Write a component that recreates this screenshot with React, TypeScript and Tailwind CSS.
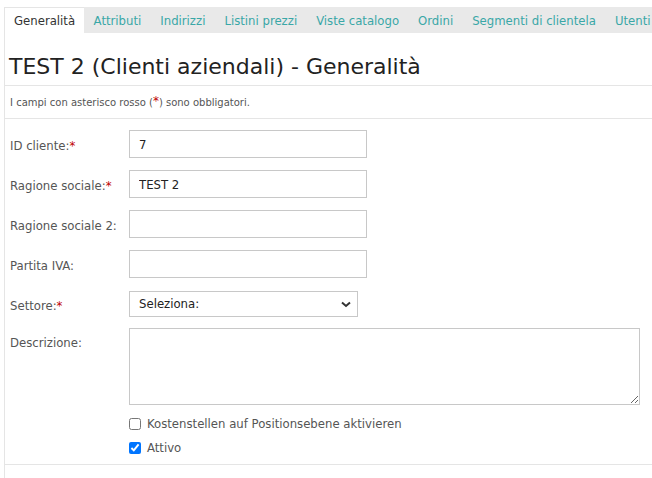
import React from "react";

const font = { fontFamily: '"DejaVu Sans Condensed", "DejaVu Sans", sans-serif' };
const wide = { fontFamily: '"DejaVu Sans", sans-serif' };

function Star() {
  return <span className="text-[#c00000] text-[13px] leading-none">*</span>;
}

function Row({ label, req, children }: { label: string; req?: boolean; children: React.ReactNode }) {
  return (
    <div className="flex items-center h-[40px]">
      <div className="w-[119px] text-[13px] text-[#555] pt-[3px]">
        {label}
        {req && <Star />}
      </div>
      {children}
    </div>
  );
}

const inputCls =
  "h-[28px] w-[238px] border border-[#c8c8c8] px-[9px] text-[13px] text-[#222] outline-none bg-white";

export default function App() {
  const tabs = ["Attributi", "Indirizzi", "Listini prezzi", "Viste catalogo", "Ordini", "Segmenti di clientela", "Utenti"];
  return (
    <div className="w-[652px] h-[478px] bg-white overflow-hidden pt-[7px]" style={font}>
      <div className="ml-[4px] border-l border-[#e5e5e5] h-full">
        <div className="flex h-[26px] bg-[#e9e9e9] whitespace-nowrap overflow-hidden">
          <div className="bg-white border-t border-[#e5e5e5] px-[9px] pt-[1px] flex items-center text-[13px] text-[#333]">
            Generalità
          </div>
          {tabs.map((t) => (
            <div key={t} className="px-[9.5px] pt-[1px] flex items-center text-[13px] text-[#3aa7a7]">
              {t}
            </div>
          ))}
        </div>
        <div
          className="h-[53px] flex items-end pb-[2px] pl-[4px] text-[22px] text-[#222] border-b border-[#e5e5e5]"
          style={wide}
        >
          TEST 2 (Clienti aziendali) - Generalità
        </div>
        <div
          className="h-[33px] flex items-center pl-[5px] text-[10px] text-[#555] border-b border-[#e5e5e5]"
          style={wide}
        >
          I campi con asterisco rosso (<span className="text-[#c00000] text-[12px] leading-none relative top-[-1px]">*</span>) sono obbligatori.
        </div>
        <div className="pl-[5px] pt-[5px]">
          <Row label="ID cliente:" req>
            <input className={inputCls} defaultValue="7" />
          </Row>
          <Row label="Ragione sociale:" req>
            <input className={inputCls} defaultValue="TEST 2" />
          </Row>
          <Row label="Ragione sociale 2:">
            <input className={inputCls} />
          </Row>
          <Row label="Partita IVA:">
            <input className={inputCls} />
          </Row>
          <Row label="Settore:" req>
            <div className="relative h-[26px] w-[229px] border border-[#c8c8c8] flex items-center px-[9px] text-[13px] text-[#222]">
              Seleziona:
              <svg className="absolute right-[6px] top-[9px]" width="10" height="7" viewBox="0 0 10 7">
                <path d="M1 1.5 L5 5 L9 1.5" stroke="#333" strokeWidth="2" fill="none" />
              </svg>
            </div>
          </Row>
          <div className="flex mt-[4px]">
            <div className="w-[119px] text-[13px] text-[#555] pt-[5px]">Descrizione:</div>
            <textarea className="h-[77px] w-[511px] border border-[#c8c8c8] outline-none resize-y" />
          </div>
          <div className="ml-[119px] mt-[12px] flex items-center gap-[6px] text-[13px] text-[#555] h-[14px]">
            <input type="checkbox" className="w-[12px] h-[12px] m-0" />
            Kostenstellen auf Positionsebene aktivieren
          </div>
          <div className="ml-[119px] mt-[10px] flex items-center gap-[6px] text-[13px] text-[#555] h-[14px]">
            <input type="checkbox" defaultChecked className="w-[12px] h-[12px] m-0" />
            Attivo
          </div>
          <div className="mt-[9px] -ml-[5px] border-t border-[#e5e5e5]" />
        </div>
      </div>
    </div>
  );
}
